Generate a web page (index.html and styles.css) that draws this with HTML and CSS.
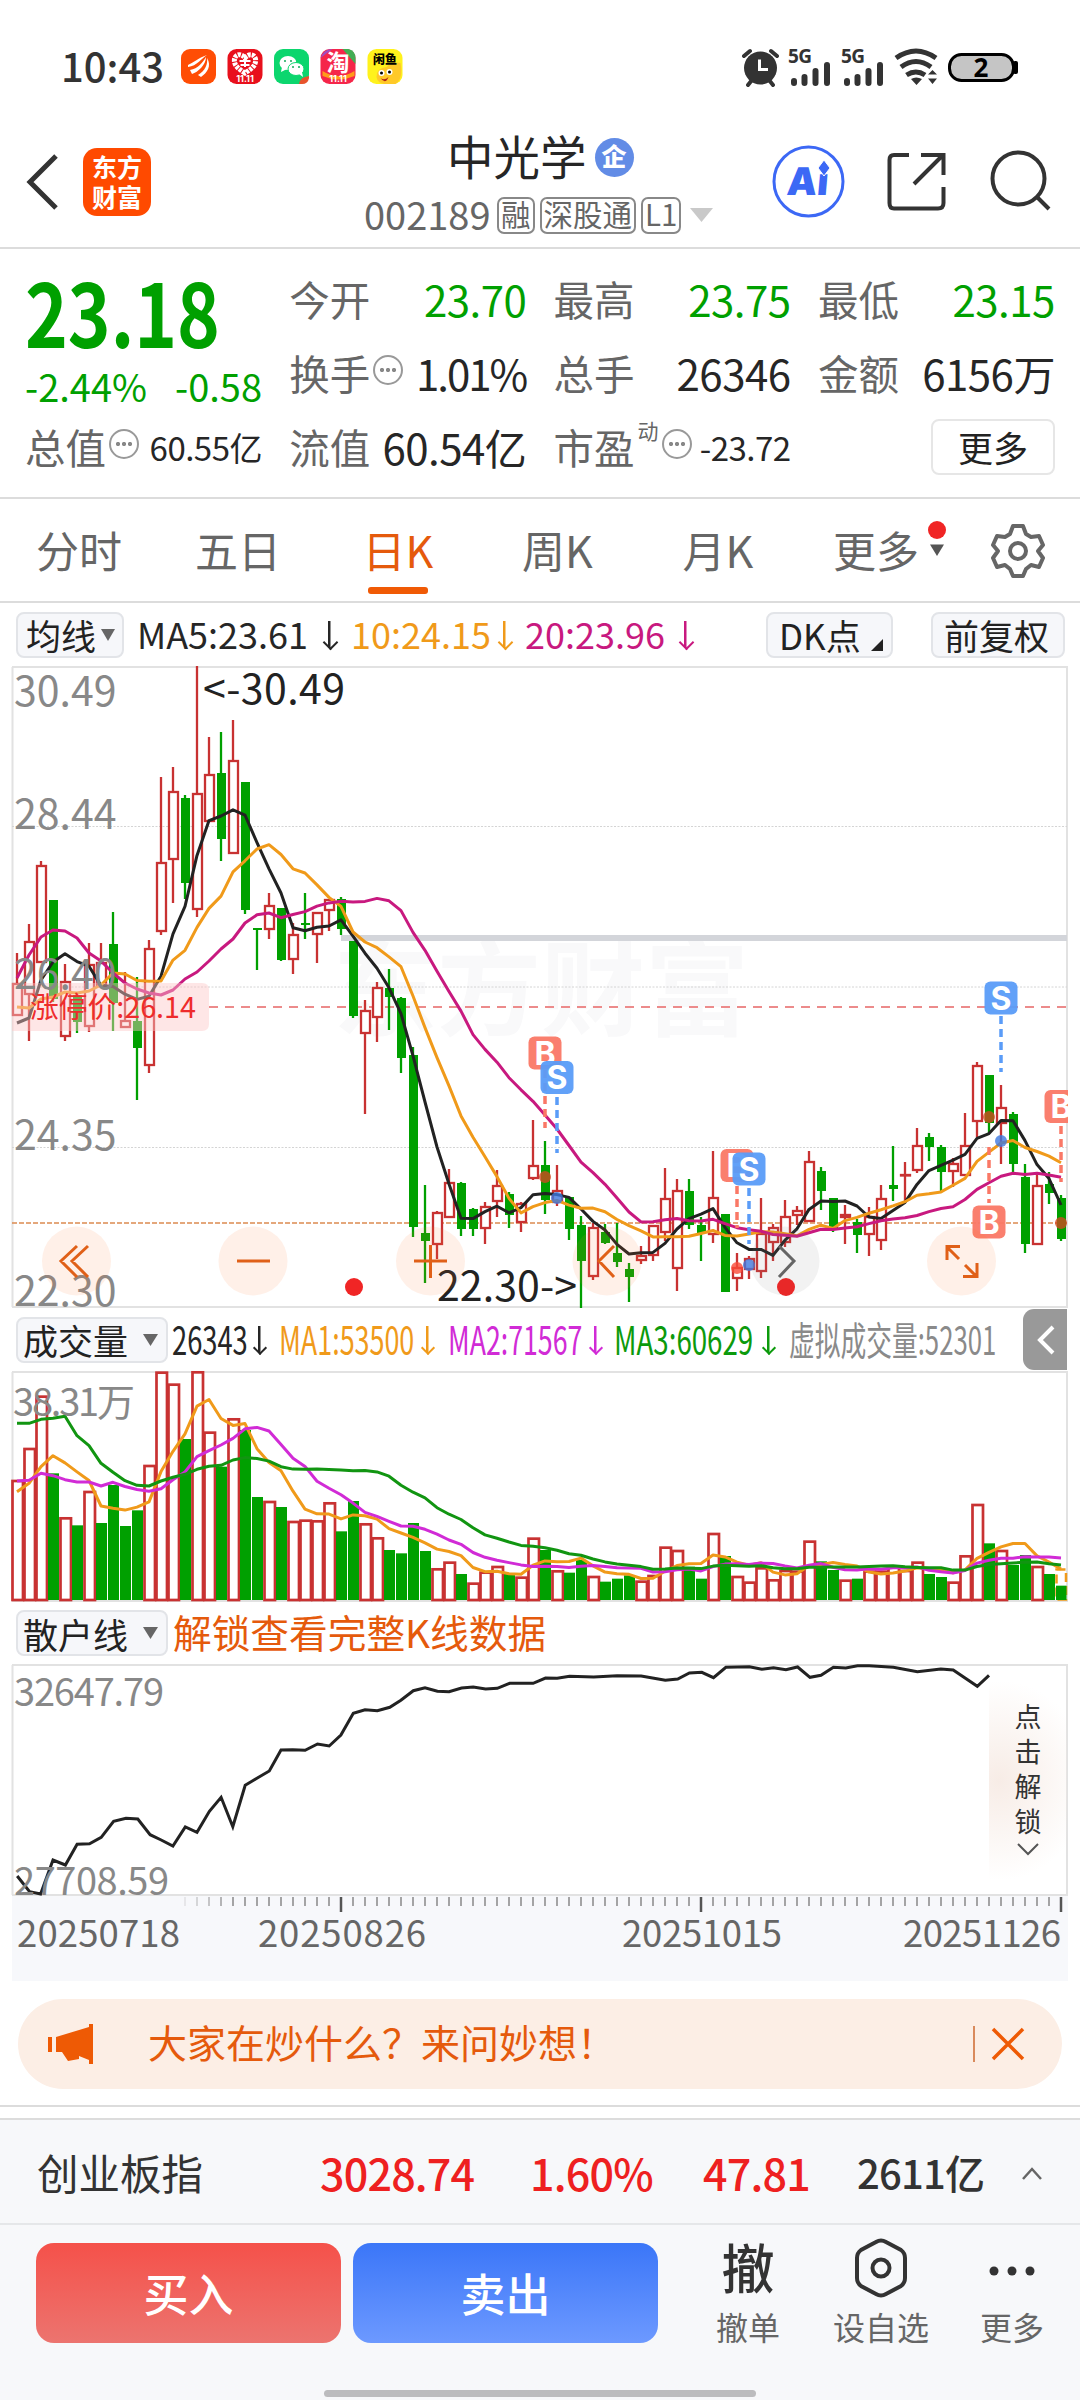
FILE: index.html
```html
<!DOCTYPE html>
<html lang="zh-CN">
<head>
<meta charset="utf-8">
<title>中光学 002189</title>
<link rel="stylesheet" href="styles.css">
</head>
<body>
<div class="status">
  <span class="clock">10:43</span>
  <svg class="apps" width="222" height="35" viewBox="0 0 222 35">
    <rect width="35" height="35" rx="9" fill="#ff4d05"/>
    <path d="M7 16C12 14 17 9 26 6C21 9 16 17 7 18ZM9 21C17 20 22 13 25 8C25 16 17 23 11 25ZM17 26C24 22 27 15 26 9C31 17 26 24 20 28Z" fill="#fff"/>
    <g transform="translate(46.5)"><rect width="35" height="35" rx="9" fill="#e8101c"/><path d="M17.500 24C11 20 6 16 7 10C8 5 14 4 17.500 9C21 4 27 5 28 10C29 16 24 20 17.500 24Z" fill="none" stroke="#fff" stroke-width="5" stroke-dasharray="3 1"/><path d="M12 12H23M17.500 8V18M13 16H22" stroke="#fff" stroke-width="2"/><text x="17.500" y="33" class="mini" fill="#fff">11.11</text></g>
    <g transform="translate(93)"><rect width="35" height="35" rx="9" fill="#0cd66e"/><ellipse cx="14" cy="14" rx="8.500" ry="7" fill="#fff"/><path d="M8 18L7 23L13 20Z" fill="#fff"/><ellipse cx="22" cy="20" rx="8" ry="6.500" fill="#fff" stroke="#0cd66e"/><path d="M25 25L29 28L28 23Z" fill="#fff"/><g fill="#13a85a"><circle cx="11" cy="12" r="1"/><circle cx="17" cy="12" r="1"/><circle cx="19" cy="18" r="1"/><circle cx="25" cy="18" r="1"/></g><path d="M25 35Q26 28 35 27V29Q34 35 28 35Z" fill="#e8532c"/></g>
    <g transform="translate(139.500)"><rect width="35" height="35" rx="9" fill="#f5264a"/><path d="M22 0H28Q35 2 35 9V15Z" fill="#42ad54"/><path d="M0 9Q3 0 12 0Z" fill="#a14cc0"/><path d="M2 22Q18 32 34 22V27Q18 34 2 27Z" fill="#ff9b1a"/><text x="17.500" y="22" class="tao">淘</text><text x="17.500" y="33" class="mini" fill="#fff">11.11</text></g>
    <g transform="translate(186.500)"><rect width="35" height="35" rx="9" fill="#fff21c"/><path d="M9 28Q9 19 19 18Q24 12 33 14Q36 30 28 35H17Q10 34 9 28Z" fill="#ffc928"/><circle cx="14" cy="24" r="3" fill="#fff"/><circle cx="22" cy="23" r="3" fill="#fff"/><circle cx="14" cy="24" r="1.500"/><circle cx="22" cy="23" r="1.500"/><path d="M13 29Q17 32 21 28Q18 36 13 29Z" fill="#b32415"/><text x="17.500" y="15" class="xianyu">闲鱼</text></g>
  </svg>
  <svg class="signals" width="280" height="44" viewBox="738 44 280 44">
    <g fill="none" stroke="#333" stroke-linecap="round">
      <path d="M744 56L750 51M777 56L771 51M748 85L752 80M773 85L769 80" stroke-width="4"/>
      <path d="M794 81V83M804.500 77V83M815.500 71V83M827 65V83" stroke-width="6"/>
      <path d="M847 81V83M857.500 77V83M868.500 71V83M880 65V83" stroke-width="6"/>
      <path d="M896 58Q916 44 936 58M901 67Q916 56 931 67M906.500 75Q916 69 925 75" stroke-width="5" stroke-linecap="butt"/>
    </g>
    <circle cx="760.500" cy="68" r="16.500" fill="#333"/>
    <path d="M759.500 59.500V69.500H768" fill="none" stroke="#fff" stroke-width="3"/>
    <path d="M911 79Q916 76 922 79L916.500 85Z M928 74.500L932.500 70L937 74.500Z M928 78.500L932.500 84L937 78.500Z" fill="#333"/>
    <text x="788" y="62.500" class="net" textLength="24">5G</text><text x="841" y="62.500" class="net" textLength="24">5G</text>
    <rect x="949.500" y="54.500" width="64" height="26" rx="12" fill="#c5c5c5" stroke="#000" stroke-width="3"/>
    <rect x="1013" y="61" width="5" height="13" rx="2" fill="#000"/>
    <text x="981" y="77" class="batt">2</text>
  </svg>
</div>

<header class="head">
  <svg class="back" width="34" height="60" viewBox="0 0 34 60"><path d="M31 4L5 30L31 56" fill="none" stroke="#333" stroke-width="5"/></svg>
  <div class="logo"><span>东方</span><span>财富</span></div>
  <div class="title">
    <div class="name">中光学<i class="corp">企</i></div>
    <div class="code"><span class="num">002189</span><b class="tag">融</b><b class="tag">深股通</b><b class="tag">L1</b><svg width="24" height="16"><path d="M0 1H23L11.500 15Z" fill="#c9c9c9"/></svg></div>
  </div>
  <svg class="acts" width="290" height="76" viewBox="770 144 290 76">
    <circle cx="808.500" cy="181.500" r="34.500" fill="none" stroke="#3c68f5" stroke-width="3"/>
    <text transform="translate(786 195) skewX(-5)" class="ai">Ai</text>
    <path d="M824 160L830 168L824 176L818 168Z" fill="#3c68f5" stroke="#fff"/>
    <g fill="none" stroke="#333" stroke-width="4"><path d="M909 155H894Q889.500 155 889.500 160V203Q889.500 208.500 894 208.500H938Q943.500 208.500 943.500 203V187" /><path d="M921 155H943.500V175M942 156L914 184"/><circle cx="1018.500" cy="178.500" r="26"/><path d="M1037 197L1049 209"/></g>
  </svg>
</header>

<section class="quote">
  <div class="price"><strong>23.18</strong><p><span>-2.44%</span><span>-0.58</span></p></div>
  <div class="cell"><label>今开</label><em class="down">23.70</em></div>
  <div class="cell"><label>最高</label><em class="down">23.75</em></div>
  <div class="cell"><label>最低</label><em class="down">23.15</em></div>
  <div class="cell"><label>换手<i class="info"></i></label><em class="tight">1.01%</em></div>
  <div class="cell"><label>总手</label><em>26346</em></div>
  <div class="cell"><label>金额</label><em>6156万</em></div>
  <div class="cell"><label>总值<i class="info"></i></label><em class="small">60.55亿</em></div>
  <div class="cell"><label>流值</label><em>60.54亿</em></div>
  <div class="cell"><label>市盈<sup>动</sup><i class="info"></i></label><em class="small">-23.72</em></div>
  <div class="cell end"><button class="more">更多</button></div>
</section>

<nav class="tabs">
  <span>分时</span><span>五日</span><span class="on">日K</span><span>周K</span><span>月K</span>
  <span class="drop">更多<svg width="20" height="36" viewBox="0 0 20 36"><circle cx="10" cy="9" r="9" fill="#f02525"/><path d="M3 23.500H17L10 35Z" fill="#555"/></svg></span>
  <svg class="gear" width="52" height="56" viewBox="-26 -28 52 56"><path d="M-5 -25H5L8 -17L13 -14L21 -15L25 -6L20 0L25 7L21 16L13 14L8 18L5 25H-5L-8 18L-13 14L-21 16L-25 7L-20 0L-25 -6L-21 -15L-13 -14L-8 -17Z" fill="none" stroke="#666" stroke-width="4" stroke-linejoin="round"/><circle r="8" fill="none" stroke="#666" stroke-width="4"/></svg>
</nav>

<div class="bar ma">
  <span class="chip chip-ma">均线<svg width="14" height="14"><path d="M0 1H14L7 13Z" fill="#666"/></svg></span>
  <span class="v v1">MA5:23.61</span><i class="arr"></i>
  <span class="v v2 orange">10:24.15</span><i class="arr orange"></i>
  <span class="v v3 pink">20:23.96</span><i class="arr pink"></i>
  <span class="chip chip-dk">DK点<svg width="12" height="12"><path d="M0 12H12V0Z" fill="#222"/></svg></span>
  <span class="chip chip-fq">前复权</span>
</div>

<svg class="chart" id="kline" width="1080" height="642" viewBox="0 666 1080 642"></svg>

<div class="bar vol">
  <span class="chip chip-wide">成交量<svg width="15" height="14"><path d="M0 1H15L7.500 13Z" fill="#666"/></svg></span>
  <span class="c w1"><span>26343</span></span><i class="arr b1"></i>
  <span class="c w2 orange"><span>MA1:53500</span></span><i class="arr b2 orange"></i>
  <span class="c w3 purple"><span>MA2:71567</span></span><i class="arr b3 purple"></i>
  <span class="c w4 green"><span>MA3:60629</span></span><i class="arr b4 green"></i>
  <span class="c w5 grey"><span>虚拟成交量:52301</span></span>
  <span class="fold"><svg width="20" height="30"><path d="M17 2L4 15L17 28" fill="none" stroke="#fff" stroke-width="4"/></svg></span>
</div>

<svg class="chart" id="volume" width="1080" height="231" viewBox="0 1371 1080 231"></svg>

<div class="bar retail">
  <span class="chip chip-wide">散户线<svg width="15" height="14"><path d="M0 1H15L7.500 13Z" fill="#666"/></svg></span>
  <span class="unlock">解锁查看完整K线数据</span>
</div>

<div class="retail-box">
  <svg class="chart" id="retail" width="1080" height="232" viewBox="0 1664 1080 232"></svg>
  <div class="lock"><span>点</span><span>击</span><span>解</span><span>锁</span><svg width="22" height="14"><path d="M1 1L11 11L21 1" fill="none" stroke="#555" stroke-width="2"/></svg></div>
</div>
<svg class="chart" id="axis" width="1080" height="85" viewBox="0 1896 1080 85"></svg>

<div class="promo">
  <svg width="46" height="40" viewBox="0 0 46 40"><path d="M0 13H4V28H0ZM8 13L41 3V0H45V40H41V36L31 32V35L20 37L14 28H8Z" fill="#ee5a05"/></svg>
  <span>大家在炒什么？来问妙想！</span>
  <i></i>
  <svg width="32" height="32"><path d="M1 1L31 31M31 1L1 31" stroke="#ee5a05" stroke-width="3.500"/></svg>
</div>
<div class="divider"></div>

<footer>
  <div class="index"><span>创业板指</span><b class="i1">3028.74</b><b class="i2">1.60%</b><b class="i3">47.81</b><b class="i4">2611亿</b><svg width="22" height="14"><path d="M2 12L11 2L20 12" fill="none" stroke="#666" stroke-width="2.500"/></svg></div>
  <div class="trade">
    <button class="buy">买入</button><button class="sell">卖出</button>
    <div class="tool t1"><b>撤</b><span>撤单</span></div>
    <div class="tool t2"><svg width="56" height="60" viewBox="-28 -30 56 60"><path d="M-5 -26Q0 -29 5 -26L20 -18Q24 -15 24 -10V10Q24 15 20 18L5 26Q0 29 -5 26L-20 18Q-24 15 -24 10V-10Q-24 -15 -20 -18Z" fill="none" stroke="#333" stroke-width="4"/><circle r="8.500" fill="none" stroke="#333" stroke-width="4"/></svg><span>设自选</span></div>
    <div class="tool t3"><svg width="56" height="60" viewBox="-28 -30 56 60"><g fill="#333"><circle cx="-18" cy="3" r="4.500"/><circle cy="3" r="4.500"/><circle cx="18" cy="3" r="4.500"/></g></svg><span>更多</span></div>
  </div>
  <div class="home"></div>
</footer>
<script src="chart.js"></script>
</body>
</html>
```

FILE: styles.css
```css
* { box-sizing: border-box; }
body { margin: 0; width: 1080px; height: 2400px; overflow: hidden; background: #fff; color: #262626; font-family: "Noto Sans CJK SC", "Noto Sans", sans-serif; }
i, em { font-style: normal; }
svg { display: block; flex: none; overflow: visible; }
button { font-family: inherit; padding: 0; }
.orange { color: #f09a1a; } .pink { color: #c8197f; } .purple { color: #d12bd6; } .green { color: #0c9a0c; } .grey { color: #8a8a8a; }

.status { height: 125px; padding: 7px 62px 0 61px; display: flex; align-items: center; }
.clock { font-size: 40px; font-weight: 500; line-height: 44px; margin-top: -3px; width: 120px; color: #333; }
.signals { margin-left: auto; }
.mini { font: 700 9px Inter; text-anchor: middle; }
.tao { font-size: 23px; font-weight: 700; fill: #fff; text-anchor: middle; }
.xianyu { font-size: 12px; font-weight: 900; text-anchor: middle; }
.net { font: 700 19px "Noto Sans"; fill: #333; }
.batt { font: 700 26px "Noto Sans"; fill: #000; text-anchor: middle; }

.head { height: 124px; border-bottom: 2px solid #dcdcdc; display: flex; }
.back { margin: 27px 0 0 25px; }
.logo { width: 68px; height: 68px; margin: 23px 0 0 24px; border-radius: 14px; background: #ff4a00; color: #fff; font-size: 25px; font-weight: 700; line-height: 30px; padding-top: 3px; text-align: center; display: flex; flex-direction: column; }
.title { width: 350px; margin-left: 213px; }
.name { height: 60px; padding-left: 83px; font-size: 46.500px; line-height: 58px; display: flex; align-items: center; }
.corp { width: 39px; height: 39px; margin: 4px 0 0 8px; border-radius: 50%; background: #628ce6; color: #fff; font-size: 25px; font-weight: 900; line-height: 34px; text-align: center; }
.code { height: 60px; display: flex; align-items: center; color: #666; white-space: nowrap; }
.num { flex: none; font-size: 38px; width: 133px; margin-top: -4px; }
.tag { flex: none; height: 37px; border: 2px solid #888; border-radius: 7px; margin-right: 5px; padding: 0 2px; font-size: 29.500px; font-weight: 400; line-height: 29px; }
.code svg { margin-left: 4px; }
.acts { margin-left: 56px; margin-top: 19px; }
.ai { font: 900 38px Inter; fill: #3c68f5; }

.quote { height: 250px; border-bottom: 2px solid #dcdcdc; padding: 14px 0 0 25px; display: grid; grid-template-columns: repeat(4, 237px); grid-template-rows: repeat(3, 74px); column-gap: 27.300px; }
.price { grid-row: span 2; color: #00a000; padding-top: 4px; }
.price strong { display: block; font-size: 88px; line-height: 86px; height: 97px; font-weight: 700; width: 225px; transform: scaleX(.825); transform-origin: left; }
.price p { margin: 0; display: flex; justify-content: space-between; font-size: 38px; line-height: 44px; }
.cell { display: flex; align-items: center; justify-content: space-between; font-size: 42px; line-height: 70px; padding-bottom: 2px; white-space: nowrap; }
.cell label { font-size: 40.500px; color: #666; display: flex; align-items: center; }
.cell em { letter-spacing: -.5px; color: #262626; }
.cell em.down { color: #00a000; }
.cell em.tight { letter-spacing: -2px; }
.cell em.small { font-size: 33px; }
.info { width: 30px; height: 30px; border: 2px solid #999; border-radius: 50%; margin: -6px 0 0 3px; background: radial-gradient(circle, #888 1.800px, transparent 2.400px) center / 6px 6px no-repeat, radial-gradient(circle, #888 1.800px, transparent 2.400px) 4px center / 6px 6px no-repeat, radial-gradient(circle, #888 1.800px, transparent 2.400px) 16px center / 6px 6px no-repeat; }
.cell sup { font-size: 21px; line-height: 20px; margin: -34px 0 0 3px; }
.end { justify-content: flex-end; }
.more { width: 124px; height: 56px; border: 2px solid #e6e6e6; border-radius: 8px; background: #fff; font-size: 35px; line-height: 48px; color: #222; }

.tabs { height: 104px; border-bottom: 2px solid #dcdcdc; display: grid; grid-template-columns: 158px 160px 160px 159px 162px 167px 1fr; font-size: 43px; line-height: 101px; color: #666; text-align: center; align-items: start; }
.tabs > span { height: 102px; }
.on { color: #e55a0c; }
.on::after { content: ""; display: block; width: 60px; height: 7px; margin: -13px auto 0; border-radius: 3px; background: #f05a05; }
.drop { display: flex; padding-left: 34px; }
.drop svg { margin: 22px 0 0 8px; }
.gear { margin: 24px 0 0 26px; }

.bar { display: flex; align-items: center; height: 63px; white-space: nowrap; }
.bar > * { flex: none; }
.chip { height: 46px; border: 2px solid #e2e4e8; border-radius: 8px; background: #f6f7fa; font-size: 35px; line-height: 39px; display: flex; align-items: center; color: #222; }
.chip-ma { width: 108px; margin-left: 16px; padding-left: 8px; justify-content: space-between; padding-right: 7px; }
.chip-dk { width: 127px; margin-left: 74px; padding-left: 11px; }
.chip-dk svg { margin: 20px 0 0 10px; }
.chip-fq { width: 134px; margin-left: 38px; padding-left: 11px; }
.v { font-size: 36px; line-height: 60px; margin-bottom: 4px; }
.v1 { width: 198px; padding-left: 13px; } .v2 { width: 146px; margin-left: 15px; } .v3 { width: 153px; margin-left: 14px; }
.arr { width: 14px; height: 27px; background: linear-gradient(currentColor, currentColor) center / 2.500px 100% no-repeat; }
.arr::after { content: ""; display: block; margin: 16px 0 0 2.500px; width: 9px; height: 9px; border: solid currentColor; border-width: 0 2.500px 2.500px 0; transform: rotate(45deg); }
.vol .arr { width: 10px; }
.vol .arr::after { margin: 17px 0 0 1px; width: 8px; height: 8px; }
.chip-wide { width: 152px; margin-left: 16px; padding: 0 8px 0 5px; justify-content: space-between; }
.c { font-size: 39px; line-height: 60px; margin-bottom: 4px; }
.c > span { display: inline-block; transform-origin: left; }
.w1 { width: 79px; margin-left: 4px; } .w1 > span { transform: scaleX(.7); }
.w2 { width: 137px; margin-left: 15px; } .w2 > span { transform: scaleX(.69); }
.w3 { width: 137px; margin-left: 16px; } .w3 > span { transform: scaleX(.685); }
.w4 { width: 146px; margin-left: 14px; } .w4 > span { transform: scaleX(.71); }
.w5 { width: 205px; margin-left: 16px; } .w5 > span { transform: scaleX(.66); }
.b1 { margin-left: 3px; } .b2 { margin-left: 6px; } .b3 { margin-left: 5px; } .b4 { margin-left: 3px; }
.fold { margin-left: auto; margin-right: 13px; width: 44px; height: 61px; border-radius: 11px 0 0 11px; background: #999; display: flex; align-items: center; padding-left: 13px; }
.retail { height: 62px; }
.unlock { font-size: 38.700px; line-height: 50px; color: #e55a0c; margin: -5px 0 0 5px; }

.chart text { font-size: 41px; fill: #888; }
.chart .dark { fill: #222; }
.chart .s38 { font-size: 38px; }
.chart .date { font-size: 36.500px; fill: #666; }
.chart .wm { font-size: 104px; font-weight: 700; fill: #f9f9fa; }
.chart .limit { font-size: 29px; fill: #ee2c2c; }
.chart .mk { font: 700 32px Inter; fill: #fff; text-anchor: middle; }
.retail-box { height: 232px; position: relative; }
.lock { position: absolute; right: 13px; top: 2px; width: 78px; height: 229px; padding-top: 32px; display: flex; flex-direction: column; align-items: center; background: radial-gradient(ellipse 90px 100px at 10px 50%, #f7ece6, rgba(255,255,255,0)); font-size: 27px; line-height: 35px; color: #333; }
.lock svg { margin-top: 5px; }

.promo { height: 90px; margin: 18px 18px 0; border-radius: 45px; background: #fceee5; display: flex; align-items: center; padding: 0 38px 0 30px; color: #e55a0c; font-size: 39px; }
.promo span { margin: -6px auto 0 54px; }
.promo i { width: 2px; height: 36px; background: #d98a5c; margin-right: 17px; }
.divider { margin-top: 16px; height: 15px; border-top: 2px solid #dcdcdc; border-bottom: 2px solid #dcdcdc; }

footer { height: 280px; background: #f7f8fa; }
.index { height: 105px; border-bottom: 2px solid #e5e7e9; display: flex; align-items: center; padding: 4px 37px 0 37px; line-height: 100px; }
.index span { font-size: 41.500px; color: #333; width: 283px; margin-top: -4px; }
.index b { font-size: 43px; font-weight: 500; letter-spacing: -.8px; color: #ee2020; margin-top: -4px; }
.i1 { width: 210px; } .i2 { width: 173px; } .i3 { width: 154px; }
.index b.i4 { width: 164px; color: #333; font-size: 40px; }
.trade { height: 165px; padding-left: 36px; display: flex; }
.trade button { width: 305px; height: 100px; margin: 18px 12px 0 0; border: 0; border-radius: 18px; color: #fff; font-size: 45px; font-weight: 500; line-height: 94px; }
.buy { background: linear-gradient(#f5514a, #ec746f); }
.sell { background: linear-gradient(#3b76f8, #6d99ff); }
.tool { width: 120px; display: flex; flex-direction: column; align-items: center; padding-top: 13px; font-size: 32px; line-height: 44px; color: #666; }
.tool b { font-size: 53px; font-weight: 500; line-height: 60px; height: 60px; margin-top: -2px; color: #333; }
.tool b + span { margin-top: 8px; }
.tool svg + span { margin-top: 6px; }
.t1 { margin-left: 18px; } .t2 { margin-left: 13px; } .t3 { margin-left: 11px; }
.home { width: 432px; height: 7px; border-radius: 4px; background: #bcbcbe; margin: 0 auto; }
```

FILE: chart.js
```js
const PITCH = 12, X0 = 17;
const cx = i => X0 + i * PITCH;
const BLACK = '#222', ORANGE = '#f09a1a', PINK = '#c8197f', PURPLE = '#d12bd6', GREEN = '#00a000', RED = '#c83232';

// Each candle: direction, high, body top, body bottom, low (chart y units).
const candles = [
'r 953 983 1016 1016','r 924 941 995 1041','r 861 865 963 963','g 900 900 999 1002','r 964 981 1037 1041','g 995 995 1022 1033','r 943 964 1027 1032','r 943 962 986 986',
'g 912 944 1003 1031','r 972 1020 1028 1028','g 977 1021 1048 1100','r 940 948 1066 1073','r 777 862 932 935','r 767 791 860 903','g 795 798 883 899','r 666 793 910 917',
'r 737 774 822 822','g 732 773 839 861','r 720 760 854 854','g 782 782 910 914','g 928 928 930 970','r 893 905 930 939','g 908 908 960 961','r 923 934 960 974',
'g 893 923 925 939','r 912 912 935 963','r 899 899 911 931','g 897 899 929 935','g 941 941 1016 1018','r 1000 1010 1034 1114','r 982 987 1018 1042','g 969 988 997 1030',
'g 997 998 1058 1073','g 1047 1055 1227 1237','g 1185 1233 1241 1283','r 1211 1212 1245 1259','r 1169 1182 1218 1218','g 1182 1183 1229 1236','g 1208 1209 1229 1236','r 1202 1206 1229 1244',
'r 1170 1185 1202 1217','g 1192 1194 1215 1228','r 1202 1203 1223 1232','r 1120 1165 1179 1180','g 1141 1165 1200 1214','r 1165 1190 1203 1206','g 1197 1197 1229 1240','g 1216 1225 1261 1308',
'r 1223 1227 1277 1280','g 1224 1232 1243 1244','g 1223 1253 1262 1267','g 1263 1269 1277 1302','r 1246 1255 1261 1264','r 1225 1225 1256 1261','r 1168 1198 1233 1241','r 1179 1190 1269 1291',
'g 1179 1191 1225 1229','g 1217 1225 1233 1261','r 1151 1197 1235 1243','g 1214 1214 1292 1292','r 1253 1267 1279 1291','r 1256 1258 1270 1279','r 1198 1233 1272 1278','r 1224 1227 1243 1261',
'r 1200 1216 1243 1247','r 1206 1210 1216 1225','r 1151 1161 1222 1222','g 1167 1171 1191 1210','g 1198 1198 1229 1232','r 1205 1214 1218 1244','g 1219 1222 1235 1253','r 1207 1216 1235 1256',
'r 1185 1198 1241 1250','g 1146 1185 1189 1201','r 1162 1174 1175 1201','r 1128 1145 1171 1173','g 1133 1137 1147 1161','g 1145 1147 1172 1192','r 1158 1163 1172 1187','r 1113 1145 1176 1176',
'r 1062 1065 1122 1137','g 1075 1075 1123 1133','r 1085 1107 1124 1164','g 1112 1114 1164 1172','g 1164 1177 1244 1253','r 1175 1185 1245 1245','g 1172 1184 1193 1204','g 1195 1198 1239 1241'
].map(s => { const [d, h, t, b, l] = s.split(' '); return { d, h: +h, t: +t, b: +b, l: +l }; });

// Volume bars: direction and bar top, in thirds of a unit below 1300.
const volumes = ('r540 r444 r287 g520 r652 g676 r573 g669 g555 g678 g631 r495 r215 r251 g417 r214 r395 g500 r355 g390 g591 r603 g621 r663 r659 r661 r607 g694 g603 r670 r712 g750 g760 g669 g753 r805 r785 g822 r848 r815 r798 g822 r830 r713 ' +
'g750 r811 g818 g780 r828 g845 g836 g826 r842 r825 r740 r750 g800 g836 r699 g768 r828 r845 r802 r838 r810 r812 r722 g784 g810 r839 g836 r812 r812 r797 r810 r785 g822 g831 r845 r766 r612 g730 r750 g795 g765 r798 g822 g857')
  .split(' ').map(s => ({ d: s[0], y: 1300 + s.slice(1) / 3 }));

const average = (vals, n, seed) => vals.map((_, i) => i < seed.length ? seed[i] : vals.slice(i - n + 1, i + 1).reduce((a, b) => a + b) / n);
const line = (ys, color) => `<polyline fill="none" stroke="${color}" stroke-width="3" stroke-linejoin="round" points="${ys.map((y, i) => cx(i) + ',' + y.toFixed(1)).join(' ')}"/>`;
const frame = (y1, y2) => `<path d="M12.500 ${y1}V${y2}M12 ${y1}H1067V${y2}H12" fill="none" stroke="#e2e2e2" stroke-width="2"/>`;

function kline() {
  let s = '';
  s += '<text class="wm" x="333" y="1028">东方财富</text><rect x="330" y="915" width="420" height="25" fill="#fff"/>';
  s += frame(667, 1307);
  for (const y of [826.5, 987, 1147.5]) s += `<path d="M12 ${y}H1067" stroke="#d4d4d4" stroke-dasharray="2 1.500"/>`;
  s += '<rect x="341" y="935" width="726" height="6" fill="#d3d5da"/>';
  s += '<path d="M209 1007H1067" stroke="#ec8b8b" stroke-width="2" stroke-dasharray="9 7"/>';
  s += '<path d="M12 1223H1067" stroke="#dc8a50" stroke-width="1.500" stroke-dasharray="5 2"/>';
  candles.forEach((c, i) => {
    const x = cx(i), h = Math.max(c.b - c.t, 2);
    if (c.d === 'g') s += `<path d="M${x} ${c.h}V${c.l}" stroke="${GREEN}" stroke-width="2.300"/><rect x="${x - 4}" y="${c.t}" width="9" height="${h}" fill="${GREEN}"/>`;
    else s += `<path d="M${x} ${c.h}V${c.t}M${x} ${c.b}V${c.l}" stroke="${RED}" stroke-width="2.300"/><rect x="${x - 4}" y="${c.t + 1}" width="9" height="${Math.max(h - 2, .5)}" fill="#fff" stroke="${RED}" stroke-width="2.300"/>`;
  });
  const close = candles.map(c => c.d === 'g' ? c.b : c.t);
  s += line(average(close, 5, [1023, 1018, 980, 962]), BLACK);
  s += line(average(close, 10, [1007, 1008, 999, 997, 992, 993, 991, 985, 973]), ORANGE);
  s += line(average(close, 20, [978, 955, 937, 930, 931, 938, 953, 961, 973, 983, 989, 993, 995, 990, 979, 972, 961, 949, 939, 923]), PINK);
  s += '<path d="M12 983H202Q209 983 209 990V1024Q209 1031 202 1031H12Z" fill="#fdc8c8" opacity=".45"/>';
  s += '<text class="limit" x="30" y="1018" textLength="166" lengthAdjust="spacingAndGlyphs">涨停价:26.14</text>';
  [['30.49', 706], ['28.44', 829], ['26.40', 989], ['24.35', 1150], ['22.30', 1306]].forEach(([t, y]) => s += `<text x="14" y="${y}">${t}</text>`);
  s += '<text class="dark" x="203" y="704" textLength="142">&lt;-30.49</text><text class="dark" x="437" y="1301" textLength="140">22.30-&gt;</text>';

  // Trade signals
  const R = '#fa7866', B = '#5a9cf8';
  const dash = (x, a, b, c) => `<path d="M${x} ${a}V${b}" stroke="${c}" stroke-width="3.500" stroke-dasharray="8 5"/>`;
  const dot = (x, y, c) => `<circle cx="${x}" cy="${y}" r="6" fill="${c}" opacity=".8"/>`;
  const mark = (x, y, t, c) => `<rect x="${x - 16.500}" y="${y - 16.500}" width="33" height="33" rx="6" fill="${c}" opacity=".95"/><text class="mk" x="${x}" y="${y + 11.500}">${t}</text>`;
  s += dash(545, 1070, 1128, R) + dash(557, 1097, 1153, B) + dash(737, 1186, 1228, R) + dash(749, 1188, 1244, B) + dash(1001, 1016, 1072, B) + dash(989, 1147, 1203, R) + dash(1061, 1126, 1182, R);
  s += dot(545, 1177, '#ce4a20') + dot(557, 1198, '#3d78e0') + dot(737, 1268, '#fa4a38') + dot(749, 1265, '#3d78e0') + dot(989, 1117, '#ce4a20') + dot(1001, 1141, '#3d78e0') + dot(1061, 1223, '#ce4a20');
  s += mark(545, 1053, 'B', R) + mark(557, 1077.5, 'S', B) + mark(737, 1165.5, 'B', R) + mark(749, 1169, 'S', B) + mark(1001, 998, 'S', B) + mark(989, 1222, 'B', R) + mark(1061, 1106.5, 'B', R);
  s += '<rect x="1068" y="1080" width="12" height="50" fill="#fff"/>';

  // Floating controls
  [76.500, 253, 430.500, 607, 785, 961.500].forEach((x, i) => s += `<circle cx="${x}" cy="1261" r="34.500" fill="${i === 4 ? '#888' : '#ff7830'}" opacity=".11"/>`);
  s += '<g fill="none" stroke="#e06018" stroke-width="3"><path d="M77 1246L61 1261L77 1277M88 1246L72 1261L88 1277M237 1261H270M414 1261H447M430.500 1245V1278M614 1246L599 1261L614 1277M959 1259L947 1247M947 1260V1246.500H960M965 1265L976 1276M963 1276.500H977V1263"/></g>';
  s += '<path d="M779 1246L794 1261L779 1277" fill="none" stroke="#666" stroke-width="3"/>';
  s += '<circle cx="354" cy="1287" r="9" fill="#f02525"/><circle cx="786" cy="1287" r="9" fill="#e82828"/>';
  document.getElementById('kline').innerHTML = s;
}

function volume() {
  let s = frame(1372, 1601);
  volumes.forEach((v, i) => {
    const x = cx(i);
    if (i === 87) s += `<rect x="${x - 4.500}" y="1569.500" width="9.500" height="30" fill="#fff" stroke="${ORANGE}" stroke-width="2.500" stroke-dasharray="9 4"/><rect x="${x - 5}" y="${v.y}" width="10.500" height="${1600 - v.y}" fill="${GREEN}"/>`;
    else if (v.d === 'g') s += `<rect x="${x - 5}" y="${v.y}" width="11" height="${1600 - v.y}" fill="${GREEN}"/>`;
    else s += `<rect x="${x - 4.500}" y="${v.y + 1}" width="10.500" height="${1599 - v.y}" fill="#fff" stroke="${RED}" stroke-width="2.700"/>`;
  });
  const thirds = a => a.map(v => 1300 + v / 3), ys = volumes.map(v => v.y);
  s += line(average(ys, 5, thirds([575, 550, 500, 467])), ORANGE);
  s += line(average(ys, 10, thirds([543, 541, 520, 527, 539, 546, 546, 558, 547])), PURPLE);
  s += line(average(ys, 20, thirds([370, 370, 358, 355, 349, 407, 437, 490, 517, 542, 556, 558, 543, 532, 523, 508, 499, 496, 480])), '#119511');
  s += '<text class="s38" x="13" y="1416" textLength="122">38.31万</text>';
  document.getElementById('volume').innerHTML = s;
}

function retail() {
  const pts = '25,828 43,875 59,882 77,780 95,795 112,733 130,731 147,712 165,664 183,655 200,657 218,704 234,720 251,738 269,681 286,697 304,634 321,592 338,680 356,556 373,535 391,513 408,450 425,449 443,451 461,432 478,438 495,405 513,340 530,329 548,332 566,322 582,301 600,272 617,263 635,274 652,275 670,264 687,261 705,267 722,265 740,250 774,250 792,234 809,235 827,229 862,231 896,227 931,228 966,241 984,237 1001,219 1019,217 1036,233 1054,202 1088,200 1106,208 1123,203 1141,209 1158,201 1176,232 1192,226 1210,202 1228,204 1245,197 1262,197 1297,202 1332,215 1366,207 1384,210 1419,259 1436,226'
    .split(' ').map(p => { const [a, b] = p.split(','); return (a / 1.4519).toFixed(1) + ',' + (1600 + b / 3).toFixed(1); }).join(' ');
  document.getElementById('retail').innerHTML = frame(1665, 1895) + `<polyline points="${pts}" fill="none" stroke="${BLACK}" stroke-width="3"/>` +
    '<text class="s38" x="14" y="1706" textLength="150">32647.79</text><text class="s38" x="14" y="1895" textLength="155">27708.59</text>';
}

function axis() {
  let s = '<rect x="12" y="1896" width="1056" height="85" fill="#f7f8fb"/>';
  for (let i = 14; i < 88; i++) {
    const major = [27, 57, 87].includes(i);
    s += `<path d="M${cx(i)} 1897V${major ? 1912 : 1906}" stroke="${major ? '#555' : '#888'}" stroke-width="${major ? 2.500 : 1.500}" opacity="${Math.min(1, (i - 13) / 5)}"/>`;
  }
  [['20250718', 17, 163], ['20250826', 258, 168], ['20251015', 622, 160], ['20251126', 903, 158]].forEach(([t, x, w]) => s += `<text class="date" x="${x}" y="1947" textLength="${w}">${t}</text>`);
  document.getElementById('axis').innerHTML = s;
}

kline(); volume(); retail(); axis();
```
